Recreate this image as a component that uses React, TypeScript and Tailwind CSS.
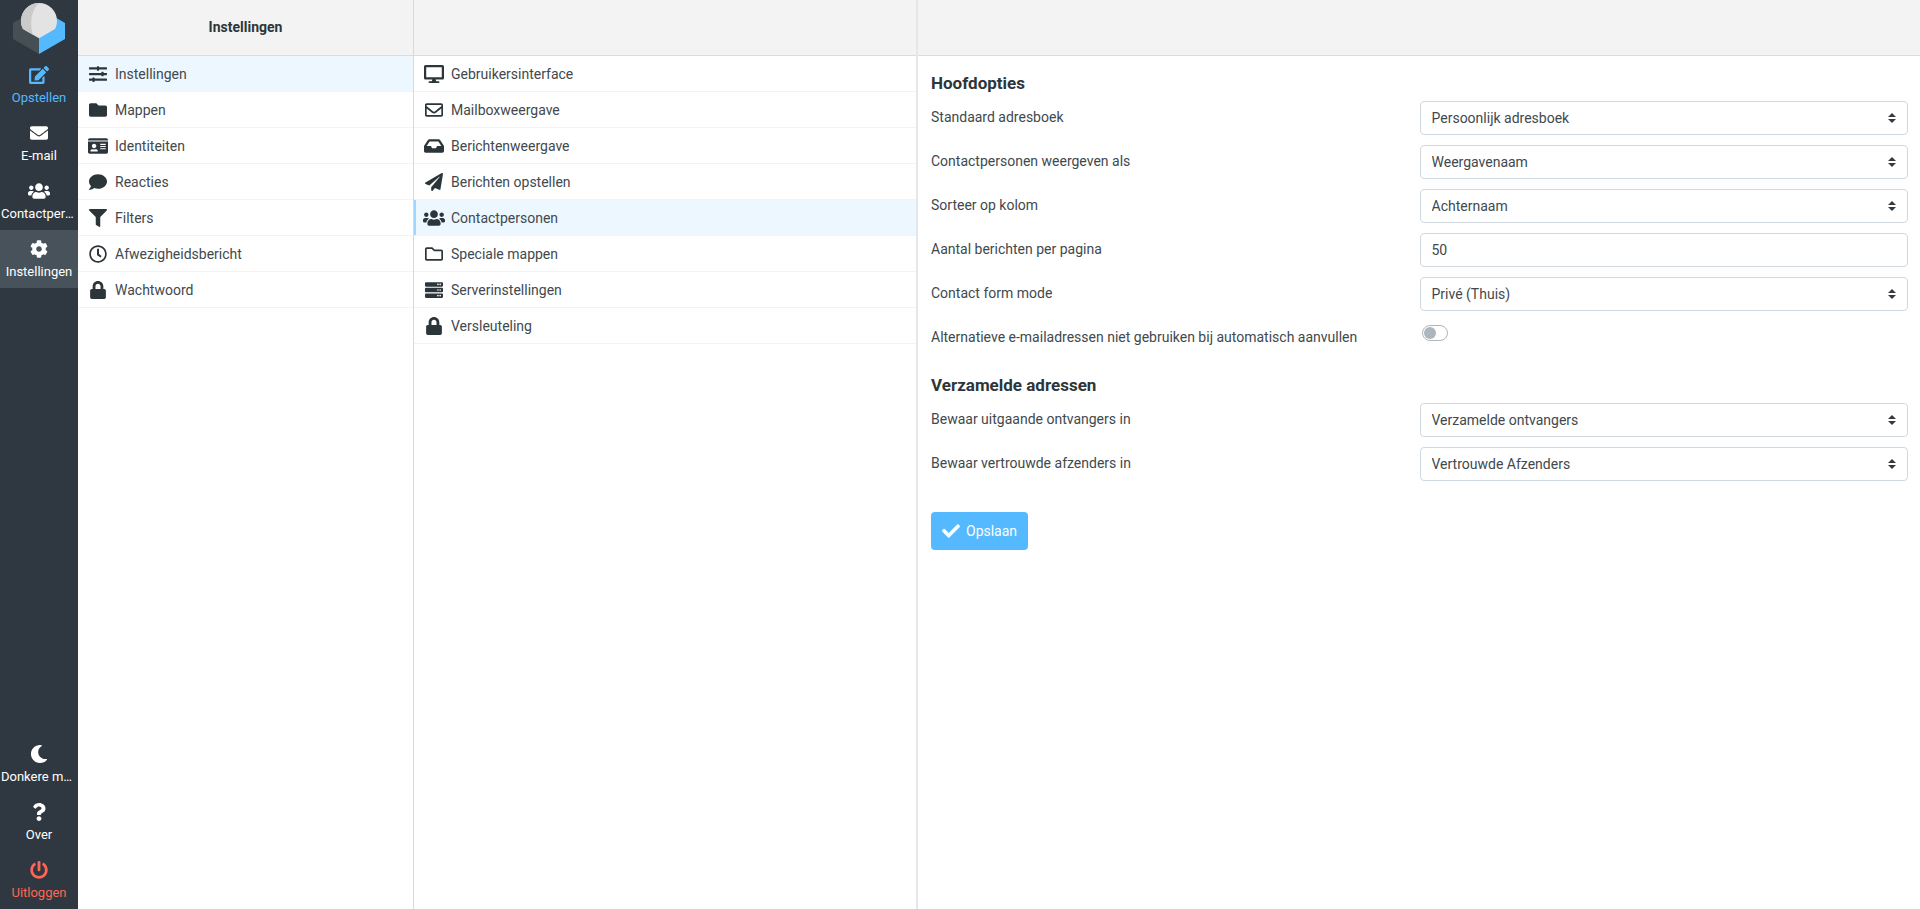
import React from "react";
import {
  FaCheck,
  FaCog,
  FaComment,
  FaDesktop,
  FaEdit,
  FaEnvelope,
  FaFilter,
  FaFolder,
  FaIdCard,
  FaInbox,
  FaLock,
  FaMoon,
  FaPaperPlane,
  FaPowerOff,
  FaQuestion,
  FaRegClock,
  FaRegEnvelope,
  FaRegFolder,
  FaServer,
  FaSlidersH,
  FaUsers,
} from "react-icons/fa";
import type { IconType } from "react-icons";

type Item = { name: string; icon: IconType; size?: string; active?: boolean; color?: string };

const taskLinks: Item[] = [
  { name: "Opstellen", icon: FaEdit, size: "w-5", color: "text-[#55b9ff]" },
  { name: "E-mail", icon: FaEnvelope },
  { name: "Contactpersonen", icon: FaUsers, size: "w-[22px]" },
  { name: "Instellingen", icon: FaCog, active: true },
];

const bottomLinks: Item[] = [
  { name: "Donkere modus", icon: FaMoon },
  { name: "Over", icon: FaQuestion },
  { name: "Uitloggen", icon: FaPowerOff, color: "text-[#ff6552]" },
];

const settingsLinks: Item[] = [
  { name: "Instellingen", icon: FaSlidersH, active: true },
  { name: "Mappen", icon: FaFolder },
  { name: "Identiteiten", icon: FaIdCard, size: "w-5" },
  { name: "Reacties", icon: FaComment },
  { name: "Filters", icon: FaFilter },
  { name: "Afwezigheidsbericht", icon: FaRegClock },
  { name: "Wachtwoord", icon: FaLock },
];

const sectionLinks: Item[] = [
  { name: "Gebruikersinterface", icon: FaDesktop, size: "w-5" },
  { name: "Mailboxweergave", icon: FaRegEnvelope },
  { name: "Berichtenweergave", icon: FaInbox, size: "w-5" },
  { name: "Berichten opstellen", icon: FaPaperPlane },
  { name: "Contactpersonen", icon: FaUsers, size: "w-[22px]", active: true },
  { name: "Speciale mappen", icon: FaRegFolder },
  { name: "Serverinstellingen", icon: FaServer },
  { name: "Versleuteling", icon: FaLock },
];

const Logo = () => (
  <svg viewBox="0 0 52 52" className="block w-[52px] h-[52px] mx-auto">
    <path d="M0 20 26 5v46L0 36z" fill="#454f54" />
    <path d="M52 20 26 5v46l26-15z" fill="#55b9ff" />
    <path d="M8 18a18 18 0 0 1 36 0c0 3-.7 5.500-2 8L26 35.300 10 26c-1.300-2.500-2-5-2-8z" fill="#e3e3e3" />
    <path d="M26 0A18 18 0 0 0 8 18c0 3 .7 5.500 2 8l10 5.800C17 23 17 8 26 0z" fill="#cacaca" />
  </svg>
);

const TaskLink = ({ name, icon: Icon, size = "w-[18px]", active, color }: Item) => (
  <li>
    <a
      href="#"
      className={`flex flex-col items-center h-[58px] pt-[10px] ${active ? "bg-[#47525a]" : ""} ${color ?? "text-white"}`}
    >
      <Icon className={`h-[18px] shrink-0 ${size}`} />
      <span className="w-full px-px mt-1 truncate text-center text-[13px] leading-5">{name}</span>
    </a>
  </li>
);

const ListLink = ({ name, icon: Icon, size = "w-[18px]", active, marker }: Item & { marker?: boolean }) => (
  <li className={`border-b border-[#f1f3f4] ${active ? "bg-[#ecf7ff]" : ""}`}>
    <a
      href="#"
      className={`flex items-center gap-[6px] h-[35px] pt-px pr-2 ${marker ? "border-l-2 pl-[6px]" : "pl-2"} ${
        active ? "border-[#9ed7ff]" : "border-transparent"
      }`}
    >
      <span className="flex justify-center w-[23px] text-[#2c363a]">
        <Icon className={`h-[18px] shrink-0 ${size}`} />
      </span>
      {name}
    </a>
  </li>
);

const Row = ({ id, label, children }: { id: string; label: string; children: React.ReactNode }) => (
  <div className="flex h-[34px] mb-[10px]">
    <label htmlFor={id} className="w-1/2 leading-8">
      {label}
    </label>
    <div className="relative w-1/2">{children}</div>
  </div>
);

const control = "block w-full h-[34px] px-[11px] bg-white border border-[#d2d9de] rounded-[4px] appearance-none";

const SelectRow = ({ id, label, value }: { id: string; label: string; value: string }) => (
  <Row id={id} label={label}>
    <select id={id} className={control}>
      <option>{value}</option>
    </select>
    <svg viewBox="0 0 8 10" className="absolute right-3 top-3 w-2 h-[10px] pointer-events-none">
      <path d="M4 0 8 4H0zM0 6h8L4 10z" fill="#343a40" />
    </svg>
  </Row>
);

export default function App() {
  return (
    <div className="flex w-full min-h-screen bg-white text-[14px] text-[#41494d] font-['Roboto',sans-serif]">
      <nav className="flex flex-col shrink-0 w-[78px] bg-[#2f3840]">
        <div className="h-14 pt-[3px]">
          <Logo />
        </div>
        <ul>
          {taskLinks.map((item) => (
            <TaskLink key={item.name} {...item} />
          ))}
        </ul>
        <ul className="mt-auto">
          {bottomLinks.map((item) => (
            <TaskLink key={item.name} {...item} />
          ))}
        </ul>
      </nav>

      <aside className="shrink-0 w-[336px] border-r border-[#d5dadd]">
        <header className="flex items-center justify-center h-14 bg-[#f3f3f3] border-b border-[#d9dddf]">
          <h1 className="font-bold text-[#2c363a]">Instellingen</h1>
        </header>
        <ul>
          {settingsLinks.map((item) => (
            <ListLink key={item.name} {...item} />
          ))}
        </ul>
      </aside>

      <section className="shrink-0 w-[504px] border-r-2 border-[#e4e8eb]">
        <header className="h-14 bg-[#f3f3f3] border-b border-[#d9dddf]" />
        <ul>
          {sectionLinks.map((item) => (
            <ListLink key={item.name} marker {...item} />
          ))}
        </ul>
      </section>

      <main className="flex-1 min-w-0">
        <header className="h-14 bg-[#f3f3f3] border-b border-[#d9dddf]" />
        <form className="pl-[13px] pr-3 pt-[15px]">
          <fieldset>
            <legend className="mb-[6px] text-[17px] leading-6 font-bold text-[#2c363a]">Hoofdopties</legend>
            <SelectRow id="addressbook" label="Standaard adresboek" value="Persoonlijk adresboek" />
            <SelectRow id="display" label="Contactpersonen weergeven als" value="Weergavenaam" />
            <SelectRow id="sort" label="Sorteer op kolom" value="Achternaam" />
            <Row id="pagesize" label="Aantal berichten per pagina">
              <input id="pagesize" type="text" defaultValue="50" className={control} />
            </Row>
            <SelectRow id="formmode" label="Contact form mode" value="Privé (Thuis)" />
            <Row id="alternatives" label="Alternatieve e-mailadressen niet gebruiken bij automatisch aanvullen">
              <input
                id="alternatives"
                type="checkbox"
                className="block w-[26px] h-4 mt-1 ml-[2px] appearance-none bg-white border border-[#adb5bd] rounded-full before:block before:w-3 before:h-3 before:m-px before:rounded-full before:bg-[#adb5bd]"
              />
            </Row>
          </fieldset>
          <fieldset className="mt-2">
            <legend className="mb-[6px] text-[17px] leading-6 font-bold text-[#2c363a]">Verzamelde adressen</legend>
            <SelectRow id="recipients" label="Bewaar uitgaande ontvangers in" value="Verzamelde ontvangers" />
            <SelectRow id="senders" label="Bewaar vertrouwde afzenders in" value="Vertrouwde Afzenders" />
          </fieldset>
          <button
            type="button"
            className="flex items-center gap-[6px] h-[38px] mt-[21px] px-[11px] text-white bg-[#55b9ff] rounded-[4px]"
          >
            <FaCheck className="w-[18px] h-[18px]" />
            Opslaan
          </button>
        </form>
      </main>
    </div>
  );
}
